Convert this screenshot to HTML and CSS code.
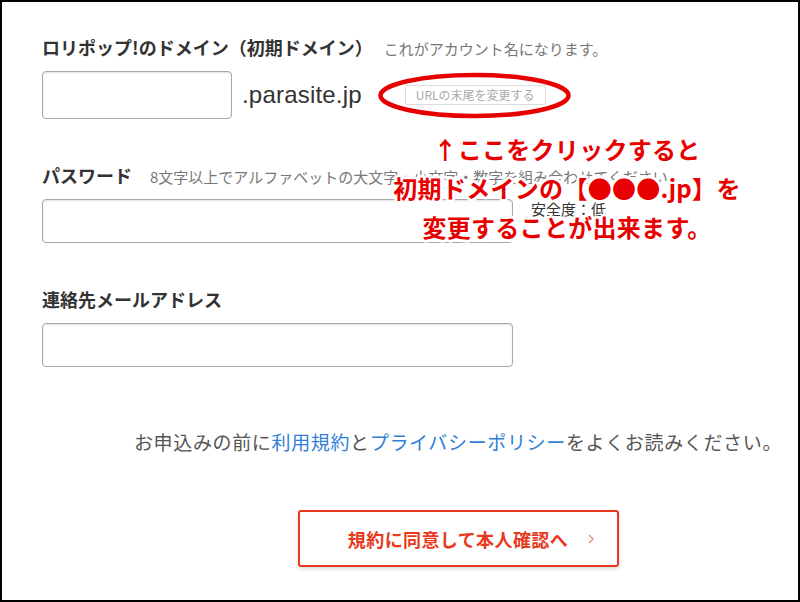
FILE: index.html
```html
<!DOCTYPE html>
<html lang="ja">
<head>
<meta charset="utf-8">
<title>ロリポップ! 申込み</title>
<link rel="stylesheet" href="styles.css">
</head>
<body>
<div class="frame">
  <div class="form">
    <div class="field first">
      <div class="label-row"><span class="label">ロリポップ!のドメイン（初期ドメイン）</span><span class="hint">これがアカウント名になります。</span></div>
      <div class="input-row">
        <div class="input small"></div>
        <span class="domain">.parasite.jp</span>
        <span class="url-btn">URLの末尾を変更する</span>
      </div>
    </div>
    <div class="field">
      <div class="label-row"><span class="label">パスワード</span><span class="hint pw">8文字以上でアルファベットの大文字・小文字・数字を組み合わせてください。</span></div>
      <div class="input-row">
        <div class="input wide"></div>
        <span class="strength">安全度：低</span>
      </div>
    </div>
    <div class="field">
      <div class="label-row"><span class="label">連絡先メールアドレス</span></div>
      <div class="input-row">
        <div class="input wide"></div>
      </div>
    </div>
    <div class="actions">
      <p class="consent">お申込みの前に<a class="link">利用規約</a>と<a class="link">プライバシーポリシー</a>をよくお読みください。</p>
      <div class="submit">規約に同意して本人確認へ<svg class="chev" width="8" height="12" viewBox="0 0 8 12"><path d="M2 2 L6 6 L2 10" fill="none" stroke="#ec9a8e" stroke-width="1.6"/></svg></div>
    </div>
  </div>
  <svg class="ellipse" width="202" height="52" viewBox="0 0 202 52"><ellipse cx="100.5" cy="25.5" rx="94" ry="20.5" fill="none" stroke="#e60000" stroke-width="4.5"/></svg>
  <div class="note">↑ここをクリックすると<br>初期ドメインの【●●●.jp】を<br>変更することが出来ます。</div>
</div>
</body>
</html>
```
FILE: styles.css
```css
html, body {
  margin: 0;
  padding: 0;
  background: #fff;
}
body {
  font-family: "Noto Sans CJK JP", "Liberation Sans", sans-serif;
  color: #333;
}
.frame {
  position: relative;
  width: 800px;
  height: 602px;
  box-sizing: border-box;
  border: 2px solid #000;
  overflow: hidden;
  background: #fff;
}
.form {
  padding: 33px 0 0 40px;
}
.field {
  margin-top: 44px;
}
.field.first {
  margin-top: 0;
}
.label-row {
  height: 24px;
  line-height: 24px;
  white-space: nowrap;
}
.label {
  font-size: 18px;
  font-weight: 700;
  color: #333;
}
.hint {
  font-size: 15px;
  color: #777;
  margin-left: 11px;
}
.hint.pw {
  margin-left: 18px;
}
.input-row {
  display: flex;
  align-items: center;
  margin-top: 12px;
}
.input {
  box-sizing: border-box;
  border: 1px solid #a8a8a8;
  border-radius: 4px;
  box-shadow: inset 0 1px 2px rgba(0,0,0,0.12);
  background: #fff;
}
.input.small {
  width: 190px;
  height: 48px;
}
.input.wide {
  width: 471px;
  height: 44px;
}
.domain {
  font-family: "Liberation Sans", Arial, sans-serif;
  font-size: 24px;
  color: #333;
  margin-left: 10px;
  letter-spacing: 0.2px;
}
.url-btn {
  margin-left: 43px;
  height: 20px;
  line-height: 18px;
  box-sizing: border-box;
  padding: 0 10px;
  border: 1px solid #dcdcdc;
  border-radius: 2px;
  font-size: 12px;
  color: #aaa;
  white-space: nowrap;
}
.strength {
  align-self: flex-start;
  margin-left: 18px;
  line-height: 20px;
  font-size: 15px;
  color: #333;
  white-space: nowrap;
}
.actions {
  width: 832px;
  display: flex;
  flex-direction: column;
  align-items: center;
}
.consent {
  margin: 63px 0 0;
  line-height: 24px;
  font-size: 19px;
  letter-spacing: 0.65px;
  color: #555;
  white-space: nowrap;
}
.link {
  color: #2f7fd6;
  text-decoration: none;
}
.submit {
  position: relative;
  margin-top: 56px;
  width: 321px;
  height: 57px;
  box-sizing: border-box;
  border: 2px solid #e8391d;
  border-radius: 3px;
  box-shadow: 0 2px 4px rgba(0,0,0,0.15);
  display: flex;
  align-items: center;
  justify-content: center;
  font-size: 18px;
  font-weight: 700;
  letter-spacing: 0.4px;
  color: #e8391d;
}
.chev {
  position: absolute;
  right: 22px;
  top: 21px;
}
.ellipse {
  position: absolute;
  left: 372px;
  top: 68px;
}
.note {
  position: absolute;
  left: 365px;
  top: 127px;
  width: 400px;
  text-align: center;
  font-size: 24px;
  line-height: 39px;
  font-weight: 700;
  color: #e80000;
  letter-spacing: 0.3px;
  white-space: nowrap;
  text-shadow:
    2px 0 #fff, -2px 0 #fff, 0 2px #fff, 0 -2px #fff,
    2px 2px #fff, -2px -2px #fff, 2px -2px #fff, -2px 2px #fff,
    3px 0 #fff, -3px 0 #fff, 0 3px #fff, 0 -3px #fff;
}
```
